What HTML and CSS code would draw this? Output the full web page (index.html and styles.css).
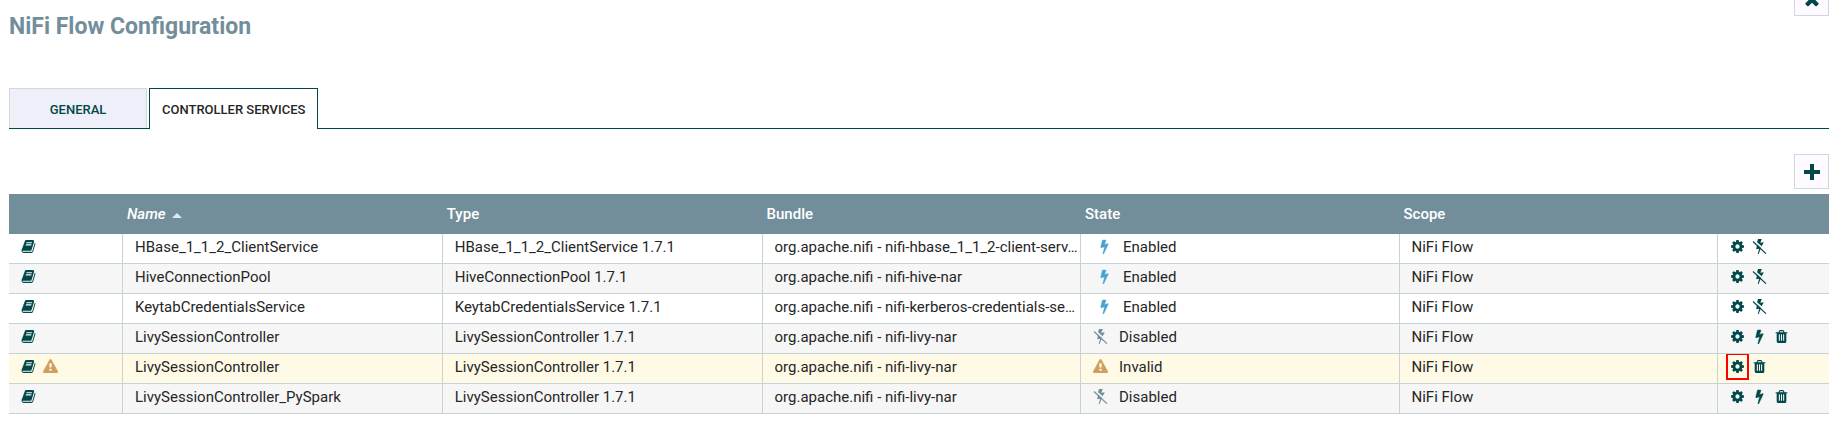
FILE: index.html
```html
<!DOCTYPE html>
<html lang="en">
<head>
<meta charset="utf-8">
<title>NiFi Flow Configuration</title>
<link rel="stylesheet" href="styles.css">
</head>
<body>
<svg class="sprite" aria-hidden="true">
  <symbol id="book" viewBox="0 0 1792 1792"><path d="M1703 478q40 57 18 129l-275 906q-19 64-76.500 107.500t-122.500 43.500h-923q-77 0-148.500-53.500t-99.500-131.500q-24-67-2-127 0-4 3-27t4-37q1-8-3-21.500t-3-19.500q2-11 8-21t16.500-23.500 16.500-23.500q23-38 45-91.500t30-91.500q3-10 .5-30t-.5-28q3-11 17-28t17-23q21-36 42-92t25-90q1-9-2.500-32t.5-28q4-13 22-30.500t22-22.500q19-26 42.500-84.500t27.500-96.500q1-8-3-25.500t-2-26.500q2-8 9-18t18-23 17-21q8-12 16.500-30.500t15-35 16-36 19.500-32 26.500-23.500 36-11.500 47.500 5.500l-1 3q38-9 51-9h761q74 0 114 56t18 130l-274 906q-36 119-71.500 153.500t-128.500 34.500h-869q-27 0-38 15-11 16-1 43 24 70 144 70h923q29 0 56-15.500t35-41.500l300-987q7-22 5-57 38 15 59 43zm-1064 2q-4 13 2 22.500t20 9.500h608q13 0 25.500-9.500t16.500-22.500l21-64q4-13-2-22.500t-20-9.500h-608q-13 0-25.500 9.500t-16.500 22.500zm-83 256q-4 13 2 22.500t20 9.500h608q13 0 25.500-9.500t16.500-22.500l21-64q4-13-2-22.500t-20-9.500h-608q-13 0-25.500 9.500t-16.500 22.500z"/></symbol>
  <symbol id="gear" viewBox="0 0 1792 1792"><path d="M1152 896q0-106-75-181t-181-75-181 75-75 181 75 181 181 75 181-75 75-181zm512-109v222q0 12-8 23t-20 13l-185 28q-19 54-39 91 35 50 107 138 10 12 10 25t-9 23q-27 37-99 108t-94 71q-12 0-26-9l-138-108q-44 23-91 38-16 136-29 186-7 28-36 28h-222q-14 0-24.500-8.500t-11.500-21.500l-28-184q-49-16-90-37l-141 107q-10 9-25 9-14 0-25-11-126-114-165-168-7-10-7-23 0-12 8-23 15-21 51-66.500t54-70.500q-27-50-41-99l-183-27q-13-2-21-12.500t-8-23.500v-222q0-12 8-23t19-13l186-28q14-46 39-92-40-57-107-138-10-12-10-24 0-10 9-23 26-36 98.500-107.500t94.500-71.500q13 0 26 10l138 107q44-23 91-38 16-136 29-186 7-28 36-28h222q14 0 24.500 8.500t11.500 21.500l28 184q49 16 90 37l142-107q9-9 24-9 13 0 25 10 129 119 165 170 7 8 7 22 0 12-8 23-15 21-51 66.500t-54 70.500q26 50 41 98l183 28q13 2 21 12.500t8 23.500z"/></symbol>
  <symbol id="warning" viewBox="0 0 1792 1792"><path d="M1024 1375v-190q0-14-9.500-23.500t-22.500-9.500h-192q-13 0-22.500 9.500t-9.500 23.500v190q0 14 9.500 23.500t22.500 9.500h192q13 0 22.500-9.500t9.500-23.500zm-2-374l18-459q0-12-10-19-13-11-24-11h-220q-11 0-24 11-10 7-10 21l17 457q0 10 10 16.500t24 6.500h185q14 0 23.500-6.500t10.500-16.500zm-14-934l768 1408q35 63-2 126-17 29-46.500 46t-63.500 17h-1536q-34 0-63.500-17t-46.500-46q-37-63-2-126l768-1408q17-31 47-49t65-18 65 18 47 49z"/></symbol>
  <symbol id="trash" viewBox="0 0 1792 1792"><path d="M704 1376v-704q0-14-9-23t-23-9h-64q-14 0-23 9t-9 23v704q0 14 9 23t23 9h64q14 0 23-9t9-23zm256 0v-704q0-14-9-23t-23-9h-64q-14 0-23 9t-9 23v704q0 14 9 23t23 9h64q14 0 23-9t9-23zm256 0v-704q0-14-9-23t-23-9h-64q-14 0-23 9t-9 23v704q0 14 9 23t23 9h64q14 0 23-9t9-23zm-544-992h448l-48-117q-7-9-17-11h-317q-10 2-17 11zm928 32v64q0 14-9 23t-23 9h-96v948q0 83-47 143.500t-113 60.500h-832q-66 0-113-58.500t-47-141.500v-952h-96q-14 0-23-9t-9-23v-64q0-14 9-23t23-9h309l70-167q15-37 54-63t79-26h320q40 0 79 26t54 63l70 167h309q14 0 23 9t9 23z"/></symbol>
  <symbol id="bolt" viewBox="0 0 1792 1792"><path d="M1333 566q18 20 7 44l-540 1157q-13 25-42 25-4 0-14-2-17-5-25.500-19t-4.500-30l197-808-406 101q-4 1-12 1-18 0-31-11-18-15-13-39l201-825q4-14 16-23t28-9h328q19 0 32 12.500t13 29.500q0 8-5 18l-171 463 396-98q8-2 12-2 19 0 34 15z" stroke="currentColor" stroke-width="60"/></symbol>
  <symbol id="bolt-off" viewBox="0 0 15 15"><path d="M6 0h3.800L8.300 3.800l3.500-.6L9.700 7.300 5.100 3.300zM5 5.400l4 3.700L6.600 15h-.9l1.500-5.300-3 .6z"/><path d="M1 2.500l13 12.200" fill="none" stroke="currentColor" stroke-width="1.100"/></symbol>
  <symbol id="close" viewBox="0 0 1792 1792"><path d="M1490 1322q0 40-28 68l-136 136q-28 28-68 28t-68-28l-294-294-294 294q-28 28-68 28t-68-28l-136-136q-28-28-28-68t28-68l294-294-294-294q-28-28-28-68t28-68l136-136q28-28 68-28t68 28l294 294 294-294q28-28 68-28t68 28l136 136q28 28 28 68t-28 68l-294 294 294 294q28 28 28 68z"/></symbol>
  <symbol id="plus" viewBox="0 0 16 16"><path d="M6 0h4v6h6v4h-6v6H6v-6H0V6h6z"/></symbol>
</svg>
<main class="dialog">
  <header class="top">
    <h1 class="title">NiFi Flow Configuration</h1>
    <button class="square" aria-label="Close"><svg class="close-icon"><use href="#close"/></svg></button>
  </header>
  <div class="tabs" role="tablist">
    <button class="tab" role="tab" aria-selected="false">GENERAL</button>
    <button class="tab active" role="tab" aria-selected="true">CONTROLLER SERVICES</button>
  </div>
  <div class="toolbar">
    <button class="square" aria-label="Create a new controller service"><svg class="plus-icon"><use href="#plus"/></svg></button>
  </div>
  <table class="services">
    <colgroup><col class="c-more"><col class="c-wide"><col class="c-wide"><col><col><col><col class="c-act"></colgroup>
    <thead>
      <tr><th></th><th class="sorted" aria-sort="ascending">Name<span class="caret"></span></th><th>Type</th><th>Bundle</th><th>State</th><th>Scope</th><th></th></tr>
    </thead>
    <tbody>
      <tr>
        <td><div class="icons"><button class="act" aria-label="Usage"><svg><use href="#book"/></svg></button></div></td>
        <td>HBase_1_1_2_ClientService</td><td>HBase_1_1_2_ClientService 1.7.1</td><td>org.apache.nifi - nifi-hbase_1_1_2-client-serv…</td>
        <td><div class="state enabled"><svg><use href="#bolt"/></svg>Enabled</div></td><td>NiFi Flow</td>
        <td><div class="icons"><button class="act" aria-label="Configure"><svg><use href="#gear"/></svg></button><button class="act" aria-label="Disable"><svg><use href="#bolt-off"/></svg></button></div></td>
      </tr>
      <tr>
        <td><div class="icons"><button class="act" aria-label="Usage"><svg><use href="#book"/></svg></button></div></td>
        <td>HiveConnectionPool</td><td>HiveConnectionPool 1.7.1</td><td>org.apache.nifi - nifi-hive-nar</td>
        <td><div class="state enabled"><svg><use href="#bolt"/></svg>Enabled</div></td><td>NiFi Flow</td>
        <td><div class="icons"><button class="act" aria-label="Configure"><svg><use href="#gear"/></svg></button><button class="act" aria-label="Disable"><svg><use href="#bolt-off"/></svg></button></div></td>
      </tr>
      <tr>
        <td><div class="icons"><button class="act" aria-label="Usage"><svg><use href="#book"/></svg></button></div></td>
        <td>KeytabCredentialsService</td><td>KeytabCredentialsService 1.7.1</td><td>org.apache.nifi - nifi-kerberos-credentials-se…</td>
        <td><div class="state enabled"><svg><use href="#bolt"/></svg>Enabled</div></td><td>NiFi Flow</td>
        <td><div class="icons"><button class="act" aria-label="Configure"><svg><use href="#gear"/></svg></button><button class="act" aria-label="Disable"><svg><use href="#bolt-off"/></svg></button></div></td>
      </tr>
      <tr>
        <td><div class="icons"><button class="act" aria-label="Usage"><svg><use href="#book"/></svg></button></div></td>
        <td>LivySessionController</td><td>LivySessionController 1.7.1</td><td>org.apache.nifi - nifi-livy-nar</td>
        <td><div class="state disabled"><svg><use href="#bolt-off"/></svg>Disabled</div></td><td>NiFi Flow</td>
        <td><div class="icons"><button class="act" aria-label="Configure"><svg><use href="#gear"/></svg></button><button class="act" aria-label="Enable"><svg><use href="#bolt"/></svg></button><button class="act" aria-label="Remove"><svg><use href="#trash"/></svg></button></div></td>
      </tr>
      <tr class="selected">
        <td><div class="icons"><button class="act" aria-label="Usage"><svg><use href="#book"/></svg></button><svg class="warn" role="img" aria-label="Warning"><use href="#warning"/></svg></div></td>
        <td>LivySessionController</td><td>LivySessionController 1.7.1</td><td>org.apache.nifi - nifi-livy-nar</td>
        <td><div class="state invalid"><svg><use href="#warning"/></svg>Invalid</div></td><td>NiFi Flow</td>
        <td><div class="icons"><button class="act marked" aria-label="Configure"><svg><use href="#gear"/></svg></button><button class="act" aria-label="Remove"><svg><use href="#trash"/></svg></button></div></td>
      </tr>
      <tr>
        <td><div class="icons"><button class="act" aria-label="Usage"><svg><use href="#book"/></svg></button></div></td>
        <td>LivySessionController_PySpark</td><td>LivySessionController 1.7.1</td><td>org.apache.nifi - nifi-livy-nar</td>
        <td><div class="state disabled"><svg><use href="#bolt-off"/></svg>Disabled</div></td><td>NiFi Flow</td>
        <td><div class="icons"><button class="act" aria-label="Configure"><svg><use href="#gear"/></svg></button><button class="act" aria-label="Enable"><svg><use href="#bolt"/></svg></button><button class="act" aria-label="Remove"><svg><use href="#trash"/></svg></button></div></td>
      </tr>
    </tbody>
  </table>
</main>
</body>
</html>
```
FILE: styles.css
```css
* { box-sizing: border-box; }
body { margin: 0; background: #fff; color: #262626; font: 15px/20px Roboto, sans-serif; }
button { font: inherit; color: #004849; padding: 0; cursor: pointer; }
svg { display: block; width: 15px; height: 15px; fill: currentColor; flex: none; }
.sprite { display: none; }
.dialog { padding: 0 14px 0 9px; }

.top { display: flex; justify-content: space-between; align-items: flex-start; height: 88px; }
.title { margin: 13px 0 0; font-size: 23px; line-height: 28px; font-weight: 700; color: #728e9b; }
.square { display: flex; align-items: center; justify-content: center; width: 35px; height: 35px; background: #fffaff; border: 1px solid #ccdadb; }
.top .square { margin-top: -19px; }
.close-icon { width: 20px; height: 20px; }
.plus-icon { width: 16px; height: 16px; }

.tabs { display: flex; gap: 2px; border-bottom: 1px solid #004849; }
.tab { height: 40px; min-width: 138px; padding: 2px 12px 0; font-size: 13px; font-weight: 500; background: #eeeff8; border: 1px solid #ccdadb; border-bottom: 0; }
.tab.active { height: 41px; margin-bottom: -1px; background: #fff; color: #262626; border-color: #004849; }

.toolbar { display: flex; justify-content: flex-end; padding: 25px 0 5px; }

.services { width: 100%; table-layout: fixed; border-collapse: separate; border-spacing: 0; }
.c-more { width: 114px; }
.c-wide { width: 17.57%; }
.c-act { width: 111px; }
th { height: 40px; padding: 0 4px; background: #728e9b; color: #fff; font-weight: 500; text-align: left; }
.sorted { font-style: italic; }
.caret { display: inline-block; margin-left: 6px; border: 5px solid transparent; border-top: 0; border-bottom-color: #dce9f7; vertical-align: 1px; }
td { height: 30px; padding: 0 0 4px 12px; border-right: 1px solid #c7d2d7; border-bottom: 1px solid #c7d2d7; white-space: nowrap; overflow: hidden; text-overflow: ellipsis; }
td:last-child { border-right: 0; }
tbody tr:nth-child(even) { background: #f6f6f6; }
tbody .selected { background: #fffae6; }
.icons, .state { display: flex; align-items: center; }
.icons { gap: 7px; }
.act { width: 15px; border: 0; background: none; }
.warn, .invalid svg { color: #cf9f5d; }
.state { gap: 11px; }
.enabled { padding-left: 4px; }
.enabled svg { color: #44a3cf; }
.disabled svg { color: #728e9b; }
.marked { padding: 2px 0; outline: 2px solid #f00; outline-offset: 2px; }
```
